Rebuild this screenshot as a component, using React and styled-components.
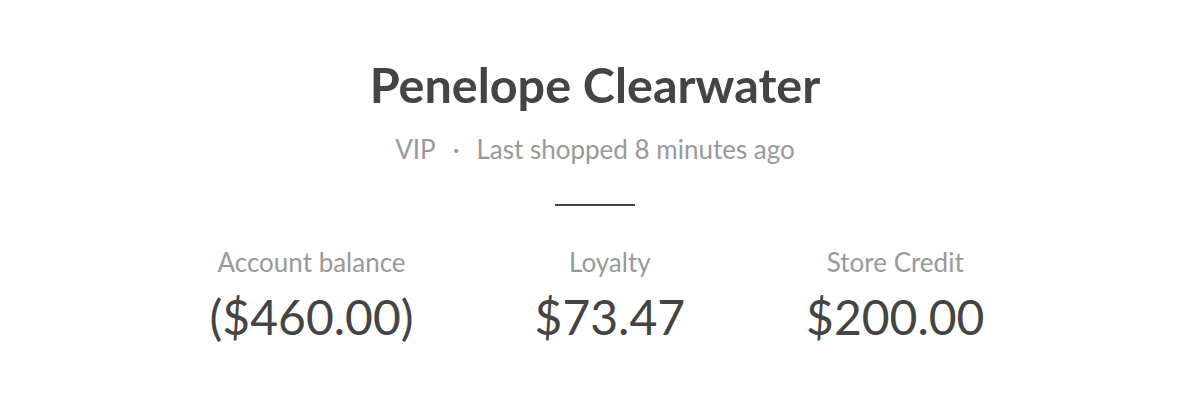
import React from "react";
import styled, { createGlobalStyle } from "styled-components";

const GlobalStyle = createGlobalStyle`
    body {
        margin: 0;
        background: #fff;
        font-family: Lato, "Open Sans", sans-serif;
    }
`;

const Card = styled.div`
    width: 1190px;
    height: 408px;
    display: flex;
    flex-direction: column;
    align-items: center;
    padding-top: 55px;
    box-sizing: border-box;
`;

const Name = styled.h1`
    margin: 0;
    font-size: 48.5px;
    font-weight: 700;
    color: #444;
    line-height: 58px;
`;

const Meta = styled.div`
    display: flex;
    align-items: center;
    gap: 17px;
    margin-top: 20px;
    font-size: 26px;
    color: #999;
`;

const Divider = styled.div`
    width: 80px;
    height: 2px;
    background: #444;
    margin-top: 39px;
`;

const Stats = styled.div`
    display: flex;
    gap: 121px;
    margin: 40px 0 0 4px;
`;

const Stat = styled.div`
    display: flex;
    flex-direction: column;
    align-items: center;
`;

const Label = styled.div`
    font-size: 26px;
    color: #999;
`;

const Value = styled.div`
    font-size: 48px;
    color: #444;
    margin-top: 10px;
`;

const stats = [
    { label: "Account balance", value: "($460.00)" },
    { label: "Loyalty", value: "$73.47" },
    { label: "Store Credit", value: "$200.00" },
];

export default function App() {
    return (
        <>
            <GlobalStyle />
            <Card>
                <Name>Penelope Clearwater</Name>
                <Meta>
                    <span>VIP</span>
                    <span>·</span>
                    <span>Last shopped 8 minutes ago</span>
                </Meta>
                <Divider />
                <Stats>
                    {stats.map((s) => (
                        <Stat key={s.label}>
                            <Label>{s.label}</Label>
                            <Value>{s.value}</Value>
                        </Stat>
                    ))}
                </Stats>
            </Card>
        </>
    );
}
